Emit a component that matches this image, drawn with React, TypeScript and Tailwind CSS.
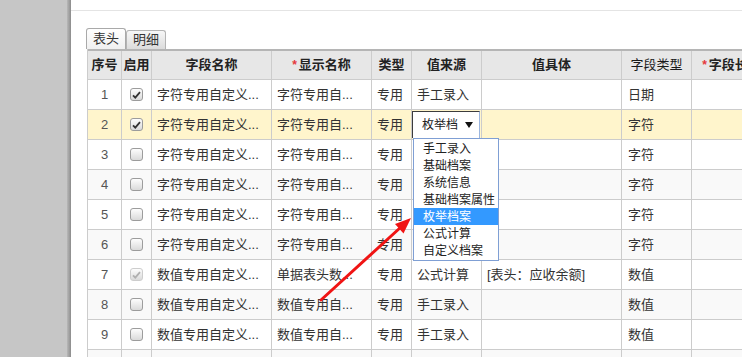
type Row = {
  no: number;
  on: boolean;
  locked?: boolean;
  name: string;
  label: string;
  src: string;
  val: string;
  type: string;
};

const rows: Row[] = [
  { no: 1, on: true, name: "字符专用自定义...", label: "字符专用自...", src: "手工录入", val: "", type: "日期" },
  { no: 2, on: true, name: "字符专用自定义...", label: "字符专用自...", src: "", val: "", type: "字符" },
  { no: 3, on: false, name: "字符专用自定义...", label: "字符专用自...", src: "", val: "", type: "字符" },
  { no: 4, on: false, name: "字符专用自定义...", label: "字符专用自...", src: "", val: "", type: "字符" },
  { no: 5, on: false, name: "字符专用自定义...", label: "字符专用自...", src: "", val: "", type: "字符" },
  { no: 6, on: false, name: "字符专用自定义...", label: "字符专用自...", src: "", val: "", type: "字符" },
  { no: 7, on: true, locked: true, name: "数值专用自定义...", label: "单据表头数...", src: "公式计算", val: "[表头：应收余额]", type: "数值" },
  { no: 8, on: false, name: "数值专用自定义...", label: "数值专用自...", src: "手工录入", val: "", type: "数值" },
  { no: 9, on: false, name: "数值专用自定义...", label: "数值专用自...", src: "手工录入", val: "", type: "数值" },
  { no: 10, on: false, name: "数值专用自定义...", label: "数值专用自...", src: "手工录入", val: "", type: "数值" },
];

const options = ["手工录入", "基础档案", "系统信息", "基础档案属性", "枚举档案", "公式计算", "自定义档案"];

function Check({ checked, disabled }: { checked: boolean; disabled?: boolean }) {
  return (
    <span
      className={`flex h-[13px] w-[13px] items-center justify-center rounded-[3px] border bg-linear-to-b from-[#fdfdfd] to-[#dadada] ${
        disabled ? "border-[#cdcdcd]" : "border-[#9c9c9c]"
      }`}
    >
      {checked && (
        <svg width="9" height="8" viewBox="0 0 9 8">
          <path d="M1 4.3 L3.3 6.6 L8 1.2" fill="none" stroke={disabled ? "#b0b0b0" : "#333"} strokeWidth="1.8" />
        </svg>
      )}
    </span>
  );
}

function SourceSelect() {
  return (
    <div className="flex h-[27px] w-[68px] items-center border-t border-l border-r border-t-[#3c3c3c] border-l-[#3c3c3c] border-r-[#9bb6e0] bg-white">
      <div className="w-[45px] overflow-hidden whitespace-nowrap pl-[9px] text-[12px] text-[#222]">枚举档案</div>
      <svg className="ml-[7px]" width="8" height="6" viewBox="0 0 8 6">
        <path d="M0 0 H8 L4 6 Z" fill="#111" />
      </svg>
    </div>
  );
}

export default function App() {
  return (
    <div className="relative flex h-[357px] w-[742px] overflow-hidden bg-[#c6c6c6] font-['Liberation_Sans','Noto_Sans_CJK_SC',sans-serif] text-[13px] text-[#333]">
      <div className="w-[67px] shrink-0" />
      <div className="w-[4px] shrink-0 bg-linear-to-r from-[#b8b8b8] to-[#8c8c8c]" />

      <div className="relative min-w-0 flex-1 overflow-hidden bg-white">
        <div className="h-[11px] overflow-hidden border-b border-[#e4e4e4] pl-[17px]">
          <div className="-mt-[18px] text-[16px] leading-[20px] text-[#333]">自定义项设置</div>
        </div>

        <div className="flex pl-[15px] pt-[17px]">
          <div className="flex h-[21px] w-[40px] items-center justify-center rounded-t-[3px] border border-b-0 border-[#a9a9a9] bg-linear-to-b from-white to-[#f0f0f0] text-[13px] text-[#333]">
            表头
          </div>
          <div className="mt-[2px] flex h-[19px] w-[40px] items-center justify-center rounded-t-[3px] border border-b-0 border-[#b4b4b4] bg-linear-to-b from-[#f7f7f7] to-[#dcdcdc] text-[13px] text-[#333]">
            明细
          </div>
        </div>

        <div className="ml-[16px] w-max border-l border-[#cccccc]">
          <div className="flex h-[31px] border-t-2 border-b border-t-[#b5b5b5] border-b-[#cccccc] bg-[#e7e7e7] font-bold text-[#222]">
            <div className="flex w-[34px] items-center justify-center border-r border-[#cccccc]">序号</div>
            <div className="flex w-[30px] items-center justify-center border-r border-[#cccccc]">启用</div>
            <div className="flex w-[120px] items-center justify-center border-r border-[#cccccc]">字段名称</div>
            <div className="flex w-[100px] items-center justify-center border-r border-[#cccccc]">
              <span className="mr-[2px] text-[12px] text-[#e5383b]">*</span>显示名称
            </div>
            <div className="flex w-[40px] items-center justify-center border-r border-[#cccccc]">类型</div>
            <div className="flex w-[70px] items-center justify-center border-r border-[#cccccc]">值来源</div>
            <div className="flex w-[140px] items-center justify-center border-r border-[#cccccc]">值具体</div>
            <div className="flex w-[70px] items-center justify-center border-r border-[#cccccc] font-normal text-[#1a1a1a]">字段类型</div>
            <div className="flex w-[80px] items-center justify-center border-r border-[#cccccc]">
              <span className="mr-[2px] text-[12px] text-[#e5383b]">*</span>字段长度
            </div>
          </div>

          {rows.map((r) => {
            const bg = r.no === 2 ? "bg-[#fff5cc]" : r.no % 2 === 0 ? "bg-[#f9f9f9]" : "bg-white";
            return (
              <div key={r.no} className={`flex h-[30px] border-b border-[#cccccc] ${bg}`}>
                <div className="flex w-[34px] items-center justify-center border-r border-[#cccccc] text-[#555]">{r.no}</div>
                <div className="flex w-[30px] items-center justify-center border-r border-[#cccccc]">
                  <Check checked={r.on} disabled={r.locked} />
                </div>
                <div className="flex w-[120px] items-center overflow-hidden whitespace-nowrap border-r border-[#cccccc] pl-[5px]">{r.name}</div>
                <div className="flex w-[100px] items-center overflow-hidden whitespace-nowrap border-r border-[#cccccc] pl-[5px]">{r.label}</div>
                <div className="flex w-[40px] items-center border-r border-[#cccccc] pl-[5px]">专用</div>
                <div className="flex w-[70px] items-center border-r border-[#cccccc] pl-[5px]">
                  {r.no === 2 ? <div className="-ml-[5px]"><SourceSelect /></div> : r.src}
                </div>
                <div className="flex w-[140px] items-center whitespace-nowrap border-r border-[#cccccc] pl-[5px]">{r.val}</div>
                <div className="flex w-[70px] items-center border-r border-[#cccccc] pl-[6px]">{r.type}</div>
                <div className="w-[80px] border-r border-[#cccccc]" />
              </div>
            );
          })}
        </div>

        {/* open list of the select in row 2 */}
        <div className="absolute left-[342px] top-[138px] w-[86px] border border-[#7f9fd4] bg-white py-px text-[12px] text-[#222]">
          {options.map((o) => (
            <div
              key={o}
              className={`flex h-[17px] items-center whitespace-nowrap pl-[9px] ${o === "枚举档案" ? "bg-[#3399ff] text-white" : ""}`}
            >
              {o}
            </div>
          ))}
        </div>
      </div>

      {/* annotation arrow */}
      <svg className="pointer-events-none absolute left-0 top-0" width="742" height="357" viewBox="0 0 742 357">
        <line x1="321" y1="300" x2="401" y2="227" stroke="#f01414" strokeWidth="3" strokeLinecap="round" />
        <polygon points="411,218 403.5,233.5 395,224" fill="#f01414" />
      </svg>
    </div>
  );
}
